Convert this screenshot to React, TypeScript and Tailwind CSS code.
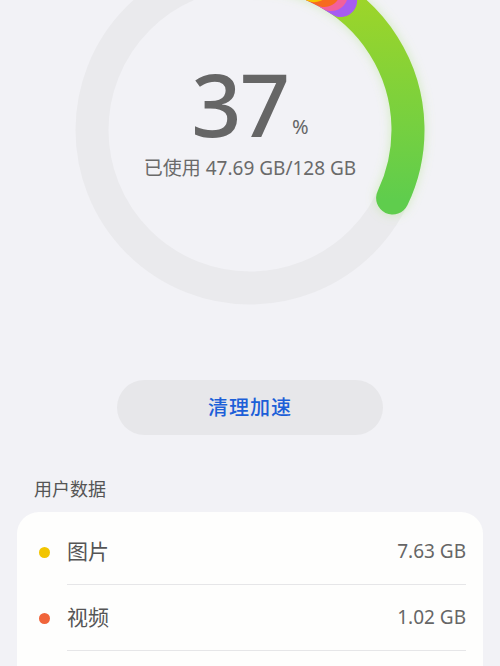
import React from 'react';

const CX = 180;
const CY = 180;
const R = 158;

const pt = (deg: number) => {
  const a = (deg * Math.PI) / 180;
  return [CX + R * Math.sin(a), CY - R * Math.cos(a)];
};

const arc = (from: number, to: number) => {
  const [x1, y1] = pt(from);
  const [x2, y2] = pt(to);
  const large = to - from > 180 ? 1 : 0;
  return `M ${x1} ${y1} A ${R} ${R} 0 ${large} 1 ${x2} ${y2}`;
};

// drawn back to front so each round end sits over the next segment
const segments = [
  { end: 115.5, color: 'url(#green)' },
  { end: 35, color: '#a65cf2' },
  { end: 31, color: '#f2609c' },
  { end: 28, color: '#f76a1e' },
  { end: 24, color: '#f5c400' },
];

const rows = [
  { name: '图片', size: '7.63 GB', dot: 'bg-[#f2c500]' },
  { name: '视频', size: '1.02 GB', dot: 'bg-[#f0643a]' },
  { name: '音频', size: '0.35 GB', dot: 'bg-[#f2609c]' },
  { name: '文档', size: '0.21 GB', dot: 'bg-[#a65cf2]' },
];

const UsageRing = () => (
  <div className="relative h-[310px] flex flex-col items-center">
    <svg viewBox="0 0 360 360" className="block w-[360px] h-[360px] shrink-0 -mt-[50px] overflow-visible">
      <defs>
        <linearGradient id="green" gradientUnits="userSpaceOnUse" x1="0" y1="20" x2="0" y2="250">
          <stop offset="0" stopColor="#a6d624" />
          <stop offset="1" stopColor="#5fcd4d" />
        </linearGradient>
        <filter id="glow" x="-30%" y="-30%" width="160%" height="160%">
          <feGaussianBlur stdDeviation="5" />
        </filter>
      </defs>
      <circle cx={CX} cy={CY} r={R} fill="none" stroke="#eaeaed" strokeWidth={33} />
      <path d={arc(0, 115.5)} fill="none" stroke="#9ee06a" strokeOpacity={0.3} strokeWidth={36} strokeLinecap="round" filter="url(#glow)" />
      {segments.map((s, i) => (
        <path key={i} d={arc(0, s.end)} fill="none" stroke={s.color} strokeWidth={33} strokeLinecap="round" />
      ))}
    </svg>
    <div className="absolute inset-x-0 top-[55px] flex flex-col items-center text-[#666666]">
      <div className="flex items-end">
        <span className="text-[88px] leading-[96px] font-medium tracking-[-2px]">37</span>
        <span className="text-[20px] leading-none mb-[14px] ml-[4px]">%</span>
      </div>
      <div className="text-[19px] leading-6 mt-[5px] text-[#6a6a6a]">已使用 47.69 GB/128 GB</div>
    </div>
  </div>
);

export default function App() {
  return (
    <div
      className="w-[500px] h-[666px] overflow-hidden bg-[#f2f2f6]"
      style={{ fontFamily: '"Noto Sans", "Noto Sans CJK SC", sans-serif' }}
    >
      <UsageRing />
      <div className="mt-[70px] flex justify-center">
        <button className="w-[266px] h-[55px] rounded-full bg-[#e7e7ea] text-[#1c5fd8] text-[20px] font-medium tracking-[1px]">
          清理加速
        </button>
      </div>
      <div className="mt-[42px] px-[34px] text-[18px] leading-6 text-[#555555]">用户数据</div>
      <div className="mx-[17px] mt-[11px] rounded-[22px] bg-[#fefefd] pt-[7px] pl-[22px] pr-[17px]">
        {rows.map((r, i) => (
          <div key={r.name} className="flex items-center h-[66px]">
            <span className={`w-[11px] h-[11px] rounded-full ${r.dot}`} />
            <div className={`ml-[17px] flex-1 h-full flex items-center justify-between ${i < rows.length - 1 ? 'border-b border-[#e6e6e8]' : ''}`}>
              <span className="text-[21px] text-[#555555]">{r.name}</span>
              <span className="text-[19px] text-[#666666]">{r.size}</span>
            </div>
          </div>
        ))}
      </div>
    </div>
  );
}
